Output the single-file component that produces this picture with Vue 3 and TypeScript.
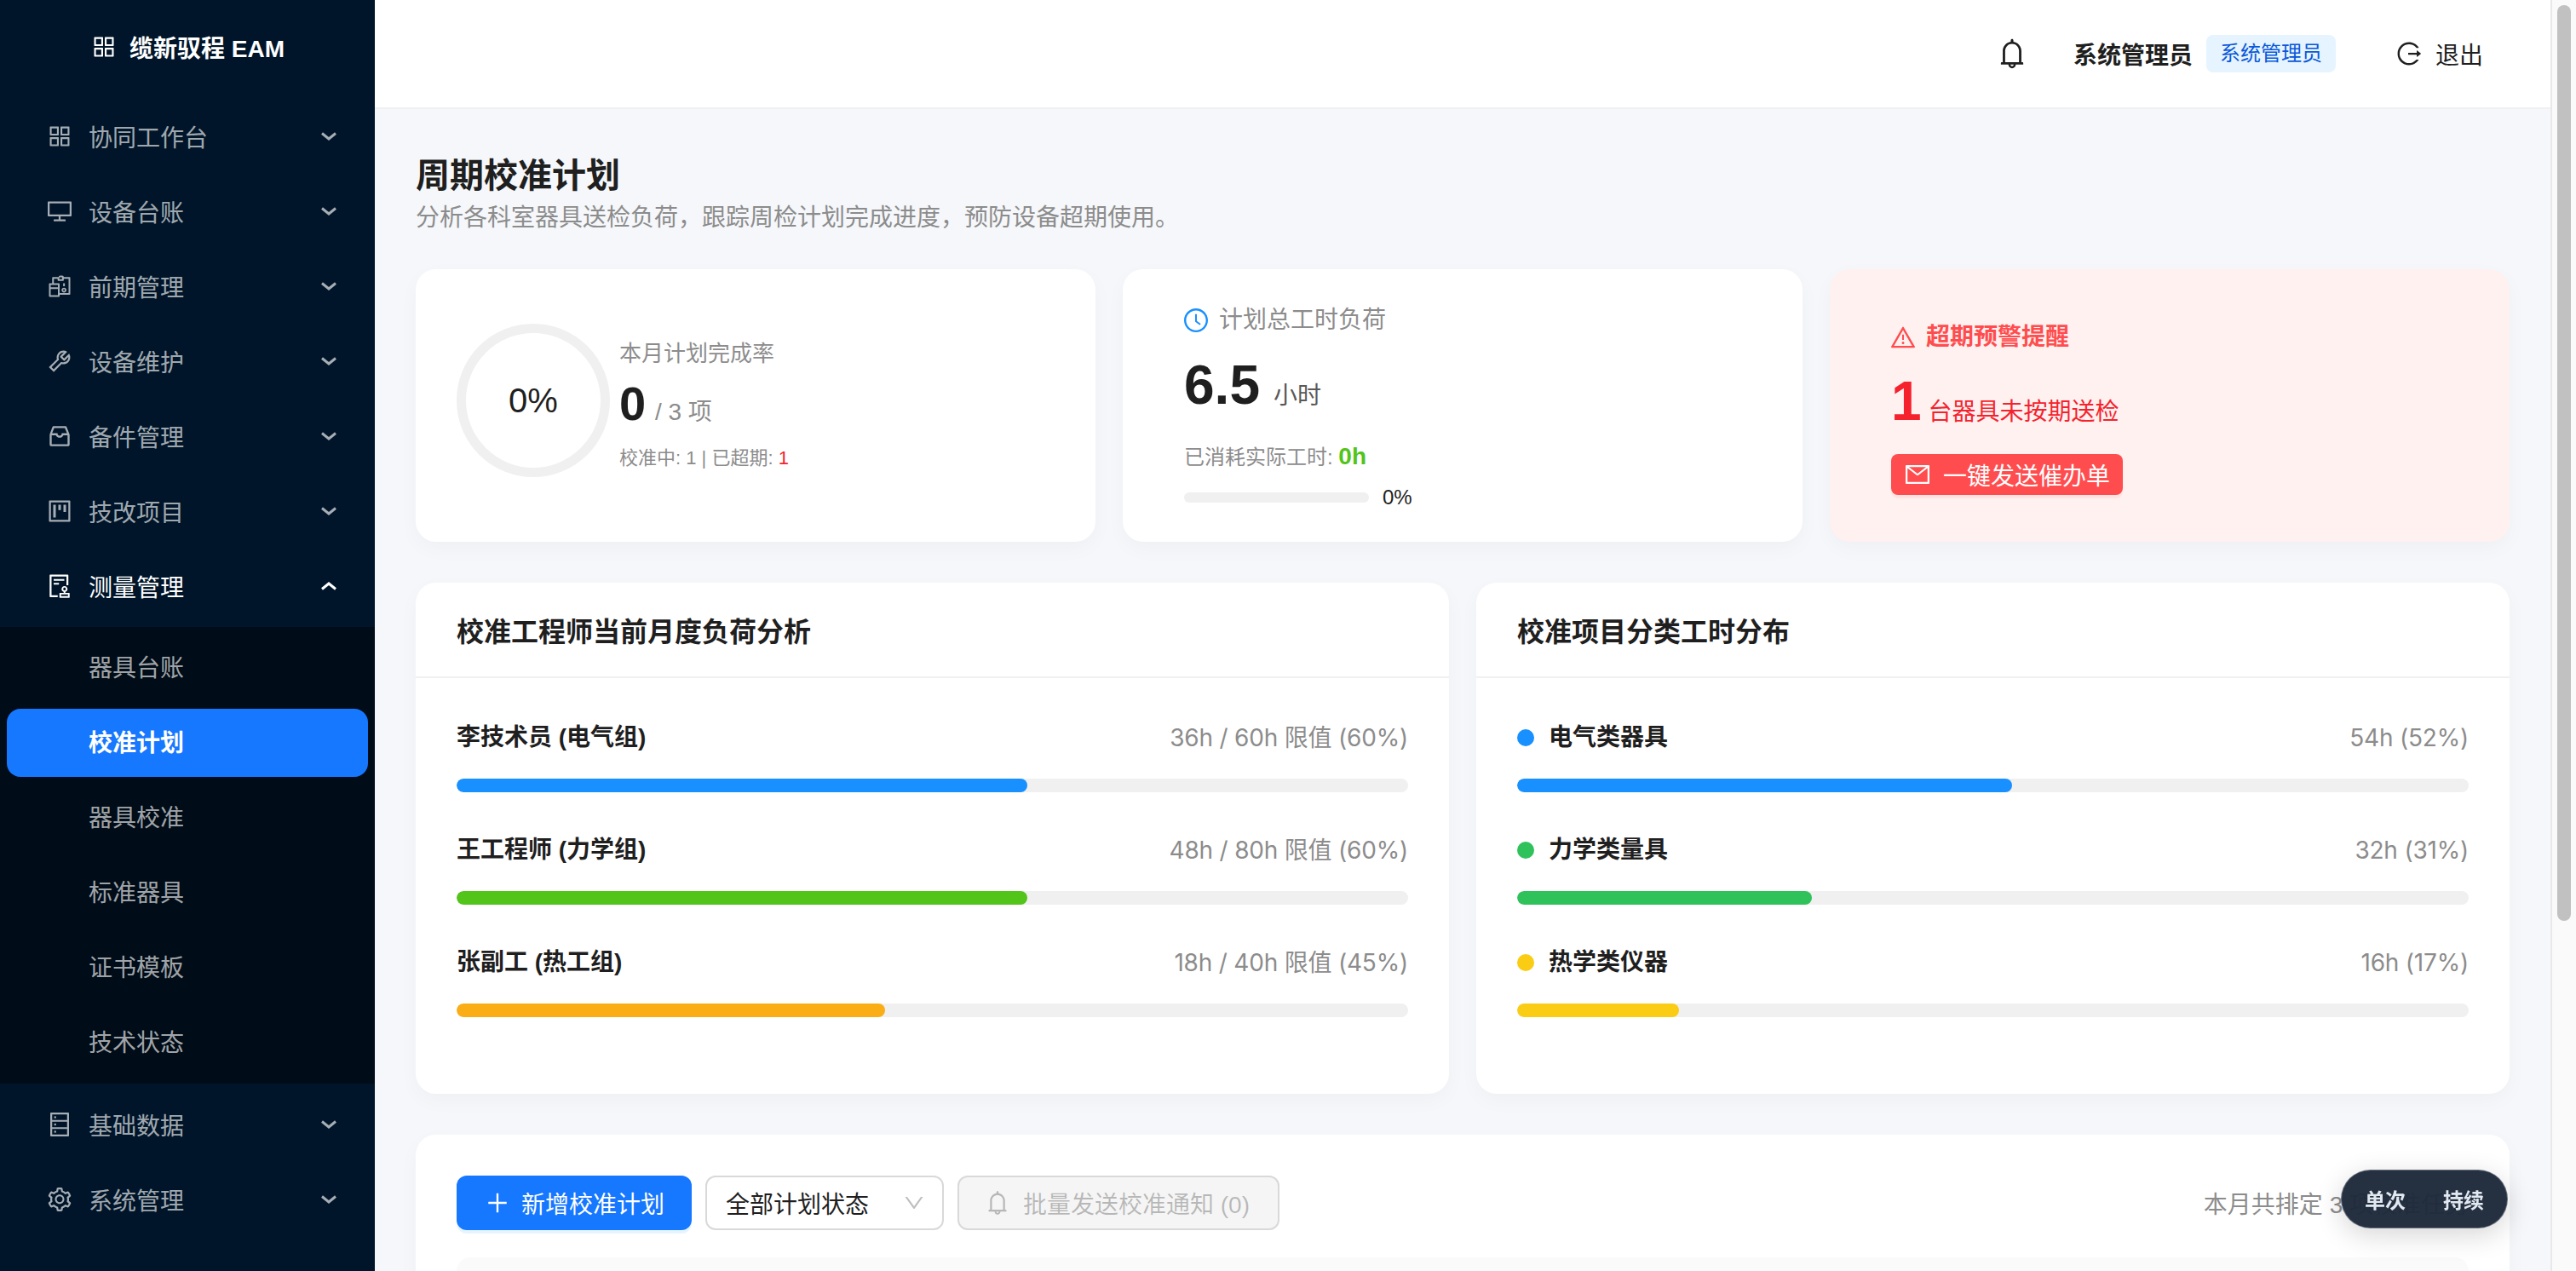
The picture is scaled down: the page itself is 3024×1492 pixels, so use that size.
<script setup lang="ts">
const icons: Record<string, string> = {
  appstore: "M464 144H160c-8.8 0-16 7.2-16 16v304c0 8.8 7.2 16 16 16h304c8.8 0 16-7.2 16-16V160c0-8.8-7.2-16-16-16zm-52 268H212V212h200v200zm452-268H560c-8.8 0-16 7.2-16 16v304c0 8.8 7.2 16 16 16h304c8.8 0 16-7.2 16-16V160c0-8.8-7.2-16-16-16zm-52 268H612V212h200v200zM464 544H160c-8.8 0-16 7.2-16 16v304c0 8.8 7.2 16 16 16h304c8.8 0 16-7.2 16-16V560c0-8.8-7.2-16-16-16zm-52 268H212V612h200v200zm452-268H560c-8.8 0-16 7.2-16 16v304c0 8.8 7.2 16 16 16h304c8.8 0 16-7.2 16-16V560c0-8.8-7.2-16-16-16zm-52 268H612V612h200v200z",
  desktop: "M928 140H96c-17.7 0-32 14.3-32 32v496c0 17.7 14.3 32 32 32h380v112H304c-8.8 0-16 7.2-16 16v48c0 4.4 3.6 8 8 8h432c4.4 0 8-3.6 8-8v-48c0-8.8-7.2-16-16-16H548V700h380c17.7 0 32-14.3 32-32V172c0-17.7-14.3-32-32-32zm-40 488H136V212h752v416z",
  reconcile: "M232 400V200c0-17.7 14.3-32 32-32h212c0-30.9 25.1-56 56-56h80c30.9 0 56 25.1 56 56h212c17.7 0 32 14.3 32 32v600c0 17.7-14.3 32-32 32H512v-64h336V232H668v48c0 17.7-14.3 32-32 32H468c-17.7 0-32-14.3-32-32v-48H296v168h-64zM500 248h104v-56c0-8-6-16-16-16h-72c-10 0-16 8-16 16v56zM144 400h336c17.7 0 32 14.3 32 32v448c0 17.7-14.3 32-32 32H144c-17.7 0-32-14.3-32-32V432c0-17.7 14.3-32 32-32zm32 64v88h272v-88H176zm0 152v232h272V616H176zM652 400h48c4.4 0 8 3.6 8 8v96c0 4.4-3.6 8-8 8h-48c-4.4 0-8-3.6-8-8v-96c0-4.4 3.6-8 8-8zm24 165c50.8 0 92 41.2 92 92s-41.2 92-92 92-92-41.2-92-92 41.2-92 92-92zm0 58c-18.8 0-34 15.2-34 34s15.2 34 34 34 34-15.2 34-34-15.2-34-34-34z",
  tool: "M876.6 239.5c-.5-.9-1.2-1.8-2-2.5-5-5-13.1-5-18.1 0L684.2 409.3l-67.9-67.9L788.7 169c.8-.8 1.4-1.6 2-2.5 3.6-6.1 1.6-13.9-4.5-17.5-98.2-58-226.8-44.7-311.3 39.7-67 67-89.2 162-66.5 247.4l-293 293c-3 3-2.8 7.9.3 11l169.7 169.7c3.1 3.1 8.1 3.3 11 .3l292.9-292.9c85.5 22.8 180.5.7 247.6-66.4 84.4-84.5 97.7-213.1 39.7-311.3zM786 499.8c-58.1 58.1-145.3 69.3-214.6 33.6l-8.8 8.8-.1-.1-274 274.1-79.2-79.2 230.1-230.1s0 .1.1.1l52.8-52.8c-35.7-69.3-24.5-156.5 33.6-214.6a184.2 184.2 0 01144-53.5L537 318.9a32.05 32.05 0 000 45.3l124.5 124.5a32.05 32.05 0 0045.3 0l132.8-132.8c3.7 51.8-14.4 104.8-53.6 143.9z",
  inbox: "M885.2 446.3l-.2-.8-112.2-285.1c-5-16.1-19.9-27.2-36.8-27.2H281.2c-17 0-32.1 11.3-36.9 27.6L139.4 443l-.3.7-.2.8c-1.3 4.9-1.7 9.9-1 14.8-.1 1.6-.2 3.2-.2 4.8V830a60.9 60.9 0 0060.8 60.8h627.2c33.5 0 60.8-27.3 60.9-60.8V464.1c0-1.3 0-2.6-.1-3.7.4-4.9 0-9.6-1.3-14.1zm-295.8-43l-.3 15.7c-.8 44.9-31.8 75.1-77.1 75.1-22.1 0-41.1-7.1-54.8-20.6S436 441.2 435.6 419l-.3-15.7H229.5L309 210h399.2l81.7 193.3H589.4zm-375 76.8h157.3c24.3 57.1 76 90.8 140.4 90.8 33.7 0 65-9.4 90.3-27.2 22.2-15.6 39.5-37.4 50.7-63.6h156.5V814H214.4V480.1z",
  project: "M280 752h80c4.4 0 8-3.6 8-8V280c0-4.4-3.6-8-8-8h-80c-4.4 0-8 3.6-8 8v464c0 4.4 3.6 8 8 8zm192-280h80c4.4 0 8-3.6 8-8V280c0-4.4-3.6-8-8-8h-80c-4.4 0-8 3.6-8 8v184c0 4.4 3.6 8 8 8zm192 72h80c4.4 0 8-3.6 8-8V280c0-4.4-3.6-8-8-8h-80c-4.4 0-8 3.6-8 8v256c0 4.4 3.6 8 8 8zm216-432H144c-17.7 0-32 14.3-32 32v736c0 17.7 14.3 32 32 32h736c17.7 0 32-14.3 32-32V144c0-17.7-14.3-32-32-32zm-40 728H184V184h656v656z",
  audit: "M296 250c-4.4 0-8 3.6-8 8v48c0 4.4 3.6 8 8 8h384c4.4 0 8-3.6 8-8v-48c0-4.4-3.6-8-8-8H296zm184 144H296c-4.4 0-8 3.6-8 8v48c0 4.4 3.6 8 8 8h184c4.4 0 8-3.6 8-8v-48c0-4.4-3.6-8-8-8zm-48 458H208V148h560v320c0 4.4 3.6 8 8 8h56c4.4 0 8-3.6 8-8V108c0-17.7-14.3-32-32-32H168c-17.7 0-32 14.3-32 32v784c0 17.7 14.3 32 32 32h264c4.4 0 8-3.6 8-8v-56c0-4.4-3.6-8-8-8zm440-88H728v-36.6c46.3-13.8 80-56.6 80-107.4 0-61.9-50.1-112-112-112s-112 50.1-112 112c0 50.7 33.7 93.6 80 107.4V764H520c-8.8 0-16 7.2-16 16v152c0 8.8 7.2 16 16 16h352c8.8 0 16-7.2 16-16V780c0-8.8-7.2-16-16-16zM646 620c0-27.6 22.4-50 50-50s50 22.4 50 50-22.4 50-50 50-50-22.4-50-50zm180 266H566v-60h260v60z",
  database: "M832 64H192c-17.7 0-32 14.3-32 32v832c0 17.7 14.3 32 32 32h640c17.7 0 32-14.3 32-32V96c0-17.7-14.3-32-32-32zm-600 72h560v208H232V136zm560 480H232V408h560v208zm0 272H232V680h560v208zM304 240a40 40 0 1080 0 40 40 0 10-80 0zm0 272a40 40 0 1080 0 40 40 0 10-80 0zm0 272a40 40 0 1080 0 40 40 0 10-80 0z",
  setting: "M924.8 625.7l-65.5-56c3.1-19 4.7-38.4 4.7-57.8s-1.6-38.8-4.7-57.8l65.5-56a32.03 32.03 0 009.3-35.2l-.9-2.6a443.74 443.74 0 00-79.7-137.9l-1.8-2.1a32.12 32.12 0 00-35.1-9.5l-81.3 28.9c-30-24.6-63.5-44-99.7-57.6l-15.7-85a32.05 32.05 0 00-25.8-25.7l-2.7-.5c-52.1-9.4-106.9-9.4-159 0l-2.7.5a32.05 32.05 0 00-25.8 25.7l-15.8 85.4a351.86 351.86 0 00-99 57.4l-81.9-29.1a32 32 0 00-35.1 9.5l-1.8 2.1a446.02 446.02 0 00-79.7 137.9l-.9 2.6c-4.5 12.5-.8 26.5 9.3 35.2l66.3 56.6c-3.1 18.8-4.6 38-4.6 57.1 0 19.2 1.5 38.4 4.6 57.1L99 625.5a32.03 32.03 0 00-9.3 35.2l.9 2.6c18.1 50.4 44.9 96.9 79.7 137.9l1.8 2.1a32.12 32.12 0 0035.1 9.5l81.9-29.1c29.8 24.5 63.1 43.9 99 57.4l15.8 85.4a32.05 32.05 0 0025.8 25.7l2.7.5a449.4 449.4 0 00159 0l2.7-.5a32.05 32.05 0 0025.8-25.7l15.7-85a350 350 0 0099.7-57.6l81.3 28.9a32 32 0 0035.1-9.5l1.8-2.1c34.8-41.1 61.6-87.5 79.7-137.9l.9-2.6c4.5-12.3.8-26.3-9.3-35zM788.3 465.9c2.5 15.1 3.8 30.6 3.8 46.1s-1.3 31-3.8 46.1l-6.6 40.1 74.7 63.9a370.03 370.03 0 01-42.6 73.6L721 702.8l-31.4 25.8c-23.9 19.6-50.5 35-79.3 45.8l-38.1 14.3-17.9 97a377.5 377.5 0 01-85 0l-17.9-97.2-37.8-14.5c-28.5-10.8-55-26.2-78.7-45.7l-31.4-25.9-93.4 33.2c-17-22.9-31.2-47.6-42.6-73.6l75.5-64.5-6.5-40c-2.4-14.9-3.7-30.3-3.7-45.5 0-15.3 1.2-30.6 3.7-45.5l6.5-40-75.5-64.5c11.3-26.1 25.6-50.7 42.6-73.6l93.4 33.2 31.4-25.9c23.7-19.5 50.2-34.9 78.7-45.7l37.9-14.3 17.9-97.2c28.1-3.2 56.8-3.2 85 0l17.9 97 38.1 14.3c28.7 10.8 55.4 26.2 79.3 45.8l31.4 25.8 92.8-32.9c17 22.9 31.2 47.6 42.6 73.6L781.8 426l6.5 39.9zM512 326c-97.2 0-176 78.8-176 176s78.8 176 176 176 176-78.8 176-176-78.8-176-176-176zm79.2 255.2A111.6 111.6 0 01512 614c-29.9 0-58-11.7-79.2-32.8A111.6 111.6 0 01400 502c0-29.9 11.7-58 32.8-79.2C454 401.6 482.1 390 512 390c29.9 0 58 11.6 79.2 32.8A111.6 111.6 0 01624 502c0 29.9-11.7 58-32.8 79.2z",
  bell: "M816 768h-24V428c0-141.1-104.3-257.7-240-277.1V112c0-22.1-17.9-40-40-40s-40 17.9-40 40v38.9c-135.7 19.4-240 136-240 277.1v340h-24c-17.7 0-32 14.3-32 32v32c0 4.4 3.6 8 8 8h216c0 61.8 50.2 112 112 112s112-50.2 112-112h216c4.4 0 8-3.6 8-8v-32c0-17.7-14.3-32-32-32zM512 888c-26.5 0-48-21.5-48-48h96c0 26.5-21.5 48-48 48zM304 768V428c0-55.6 21.6-107.8 60.9-147.1S456.4 220 512 220c55.6 0 107.8 21.6 147.1 60.9S720 372.4 720 428v340H304z",
  logout: "M868 732h-70.3c-4.8 0-9.3 2.1-12.3 5.8-7 8.5-14.5 16.7-22.4 24.5a353.84 353.84 0 01-112.7 75.9A352.8 352.8 0 01512.4 866c-47.9 0-94.3-9.4-137.9-27.8a353.84 353.84 0 01-112.7-75.9 353.28 353.28 0 01-76-112.5C167.3 606.2 158 559.9 158 512s9.4-94.2 27.8-137.8c17.8-42.1 43.4-80 76-112.5s70.5-58.1 112.7-75.9c43.6-18.4 90-27.8 137.9-27.8 47.9 0 94.3 9.3 137.9 27.8 42.2 17.8 80.1 43.4 112.7 75.9 7.9 7.9 15.3 16.1 22.4 24.5 3 3.7 7.6 5.8 12.3 5.8H868c6.3 0 10.2-7 6.7-12.3C798 160.5 663.8 81.6 511.3 82 271.7 82.6 79.6 277.1 82 516.4 84.4 751.9 276.2 942 512.4 942c152.1 0 285.7-78.8 362.3-197.7 3.4-5.3-.4-12.3-6.7-12.3zm88.9-226.3L815 393.7c-5.3-4.2-13-.4-13 6.3v76H488c-4.4 0-8 3.6-8 8v56c0 4.4 3.6 8 8 8h314v76c0 6.7 7.8 10.5 13 6.3l141.9-112a8 8 0 000-12.6z",
  clock: "M512 64C264.6 64 64 264.6 64 512s200.6 448 448 448 448-200.6 448-448S759.4 64 512 64zm0 820c-205.4 0-372-166.6-372-372s166.6-372 372-372 372 166.6 372 372-166.6 372-372 372zM686.7 638.6L544.1 535.5V288c0-4.4-3.6-8-8-8H488c-4.4 0-8 3.6-8 8v275.4c0 2.6 1.2 5 3.3 6.5l165.4 120.6c3.6 2.6 8.6 1.8 11.2-1.7l28.6-39c2.6-3.7 1.8-8.7-1.8-11.2z",
  warning: "M464 720a48 48 0 1096 0 48 48 0 10-96 0zm16-304v184c0 4.4 3.6 8 8 8h48c4.4 0 8-3.6 8-8V416c0-4.4-3.6-8-8-8h-48c-4.4 0-8 3.6-8 8zm475.7 440l-416-720c-6.2-10.7-16.9-16-27.7-16s-21.6 5.3-27.7 16l-416 720C56 877.4 71.4 904 96 904h832c24.6 0 40-26.6 27.7-48zm-783.5-27.9L512 239.9l339.8 588.2H172.2z",
  mail: "M928 160H96c-17.7 0-32 14.3-32 32v640c0 17.7 14.3 32 32 32h832c17.7 0 32-14.3 32-32V192c0-17.7-14.3-32-32-32zm-40 110.8V792H136V270.8l-27.6-21.5 39.3-50.5 42.8 33.3h643.1l42.8-33.3 39.3 50.5-27.7 21.5zM833.6 232L512 482 190.4 232l-42.8-33.3-39.3 50.5 27.6 21.5 341.6 265.6a55.99 55.99 0 0068.7 0L888 270.8l27.6-21.5-39.3-50.5-42.7 33.2z",
  plus: "M482 152h60q8 0 8 8v704q0 8-8 8h-60q-8 0-8-8V160q0-8 8-8zM176 474h672q8 0 8 8v60q0 8-8 8H176q-8 0-8-8v-60q0-8 8-8z",
  down: "M884 256h-75c-5.1 0-9.9 2.5-12.9 6.6L512 654.2 227.9 262.6c-3-4.1-7.8-6.6-12.9-6.6h-75c-6.5 0-10.3 7.4-6.5 12.7l352.6 486.1c12.8 17.6 39 17.6 51.7 0l352.6-486.1c3.9-5.3.1-12.7-6.4-12.7z",
}

const topMenu = [
  { name: "协同工作台", icon: "appstore" },
  { name: "设备台账", icon: "desktop" },
  { name: "前期管理", icon: "reconcile" },
  { name: "设备维护", icon: "tool" },
  { name: "备件管理", icon: "inbox" },
  { name: "技改项目", icon: "project" },
]
const subMenu = ["器具台账", "校准计划", "器具校准", "标准器具", "证书模板", "技术状态"]
const bottomMenu = [
  { name: "基础数据", icon: "database" },
  { name: "系统管理", icon: "setting" },
]

const engineers = [
  { name: "李技术员 (电气组)", info: "36h / 60h 限值 (60%)", pct: 60, color: "#1890ff" },
  { name: "王工程师 (力学组)", info: "48h / 80h 限值 (60%)", pct: 60, color: "#52c41a" },
  { name: "张副工 (热工组)", info: "18h / 40h 限值 (45%)", pct: 45, color: "#faad14" },
]
const categories = [
  { name: "电气类器具", info: "54h (52%)", pct: 52, color: "#1890ff" },
  { name: "力学类量具", info: "32h (31%)", pct: 31, color: "#2fc25b" },
  { name: "热学类仪器", info: "16h (17%)", pct: 17, color: "#facc14" },
]
</script>

<template>
  <div class="app">
    <aside class="sider">
      <div class="logo">
        <svg class="logo-icon" viewBox="0 0 1024 1024"><path :d="icons.appstore" /></svg>
        <span>缆新驭程 EAM</span>
      </div>
      <div class="menu">
        <div v-for="m in topMenu" :key="m.name" class="item">
          <svg class="icon" viewBox="0 0 1024 1024"><path :d="icons[m.icon]" /></svg>
          <span class="label">{{ m.name }}</span>
          <svg class="arrow" viewBox="0 0 20 12"><path d="M2 2.5 10 9l8-6.5" /></svg>
        </div>
        <div class="item open">
          <svg class="icon" viewBox="0 0 1024 1024"><path :d="icons.audit" /></svg>
          <span class="label">测量管理</span>
          <svg class="arrow" viewBox="0 0 20 12"><path d="M2 9.5 10 3l8 6.5" /></svg>
        </div>
        <div class="sub">
          <div v-for="s in subMenu" :key="s" class="sub-item" :class="{ active: s === '校准计划' }">{{ s }}</div>
        </div>
        <div v-for="m in bottomMenu" :key="m.name" class="item">
          <svg class="icon" viewBox="0 0 1024 1024"><path :d="icons[m.icon]" /></svg>
          <span class="label">{{ m.name }}</span>
          <svg class="arrow" viewBox="0 0 20 12"><path d="M2 2.5 10 9l8-6.5" /></svg>
        </div>
      </div>
    </aside>

    <div class="right">
      <header class="topbar">
        <svg class="bell" viewBox="0 0 1024 1024"><path :d="icons.bell" /></svg>
        <span class="user">系统管理员</span>
        <span class="tag">系统管理员</span>
        <span class="logout">
          <svg class="logout-icon" viewBox="0 0 1024 1024"><path :d="icons.logout" /></svg>
          退出
        </span>
      </header>

      <main class="content">
        <h1 class="title">周期校准计划</h1>
        <p class="subtitle">分析各科室器具送检负荷，跟踪周检计划完成进度，预防设备超期使用。</p>

        <section class="stats">
          <div class="stat stat-rate">
            <div class="ring">0%</div>
            <div class="rate-text">
              <div class="rate-label">本月计划完成率</div>
              <div class="rate-value"><b>0</b><span> / 3 项</span></div>
              <div class="rate-foot">校准中: 1 | 已超期: <em>1</em></div>
            </div>
          </div>

          <div class="stat stat-hours">
            <div class="hours-title">
              <svg class="clock" viewBox="0 0 1024 1024"><path :d="icons.clock" /></svg>
              计划总工时负荷
            </div>
            <div class="hours-value"><b>6.5</b><span>小时</span></div>
            <div class="hours-used">已消耗实际工时: <b>0h</b></div>
            <div class="hours-progress">
              <div class="mini-track"></div>
              <span>0%</span>
            </div>
          </div>

          <div class="stat stat-alert">
            <div class="alert-title">
              <svg class="warn" viewBox="0 0 1024 1024"><path :d="icons.warning" /></svg>
              超期预警提醒
            </div>
            <div class="alert-value"><b>1</b><span>台器具未按期送检</span></div>
            <button type="button" class="alert-btn">
              <svg class="btn-icon" viewBox="0 0 1024 1024"><path :d="icons.mail" /></svg>
              一键发送催办单
            </button>
          </div>
        </section>

        <section class="charts">
          <div class="chart">
            <div class="chart-head">校准工程师当前月度负荷分析</div>
            <div class="chart-body">
              <div v-for="r in engineers" :key="r.name" class="row">
                <div class="row-head">
                  <span class="row-name">{{ r.name }}</span>
                  <span class="row-info">{{ r.info }}</span>
                </div>
                <div class="track">
                  <div class="fill" :style="{ width: r.pct + '%', background: r.color }"></div>
                </div>
              </div>
            </div>
          </div>
          <div class="chart">
            <div class="chart-head">校准项目分类工时分布</div>
            <div class="chart-body">
              <div v-for="r in categories" :key="r.name" class="row">
                <div class="row-head">
                  <span class="row-name">
                    <i class="dot" :style="{ background: r.color }"></i>{{ r.name }}
                  </span>
                  <span class="row-info">{{ r.info }}</span>
                </div>
                <div class="track">
                  <div class="fill" :style="{ width: r.pct + '%', background: r.color }"></div>
                </div>
              </div>
            </div>
          </div>
        </section>

        <section class="plans">
          <div class="toolbar">
            <button type="button" class="btn-primary">
              <svg class="btn-icon" viewBox="0 0 1024 1024"><path :d="icons.plus" /></svg>
              新增校准计划
            </button>
            <div class="select">
              <span>全部计划状态</span>
              <svg class="select-arrow" viewBox="0 0 1024 1024"><path :d="icons.down" /></svg>
            </div>
            <button type="button" class="btn-disabled" disabled>
              <svg class="btn-icon" viewBox="0 0 1024 1024"><path :d="icons.bell" /></svg>
              批量发送校准通知 (0)
            </button>
            <span class="total">本月共排定 3 项校准任务</span>
          </div>
          <div class="table-head"></div>
        </section>
      </main>
    </div>

    <div class="scrollbar">
      <div class="thumb"></div>
    </div>

    <div class="pill">
      <span>单次</span>
      <span>持续</span>
    </div>
  </div>
</template>

<style>
html, body {
  overflow: hidden;
}
</style>

<style scoped>
.app {
  display: flex;
  height: 100vh;
  font-family: "Liberation Sans", "Noto Sans CJK SC", sans-serif;
  font-size: 28px;
  color: #1f1f1f;
}
svg {
  fill: currentColor;
  flex: none;
}

/* sidebar */
.sider {
  width: 440px;
  flex: none;
  background: #001529;
}
.logo {
  height: 110px;
  display: flex;
  align-items: center;
  justify-content: center;
  gap: 14px;
  color: #fff;
  font-weight: 700;
}
.logo-icon {
  width: 32px;
  height: 32px;
}
.menu {
  padding-top: 10px;
}
.item {
  height: 80px;
  margin-bottom: 8px;
  padding: 0 44px 0 54px;
  display: flex;
  align-items: center;
  color: rgba(255, 255, 255, 0.65);
}
.item .icon {
  width: 32px;
  height: 32px;
  margin-right: 18px;
}
.item .label {
  flex: 1;
}
.arrow {
  width: 20px;
  height: 12px;
  fill: none;
  stroke: currentColor;
  stroke-width: 3;
}
.item.open {
  color: #fff;
}
.sub {
  background: #000c17;
  padding: 8px 0;
  margin-bottom: 8px;
}
.sub-item {
  height: 80px;
  line-height: 82px;
  margin: 0 8px 8px;
  padding-left: 96px;
  border-radius: 16px;
  color: rgba(255, 255, 255, 0.65);
}
.sub-item:last-child {
  margin-bottom: 0;
}
.sub-item.active {
  background: #1677ff;
  color: #fff;
  font-weight: 600;
}

/* right pane */
.right {
  flex: 1;
  min-width: 0;
  overflow: hidden;
  background: #f5f7fa;
}
.scrollbar {
  width: 30px;
  flex: none;
  box-sizing: border-box;
  padding: 6px 6px 0;
  background: #fafafa;
  border-left: 2px solid #e8e8e8;
}
.thumb {
  height: 1075px;
  background: #c1c1c1;
  border-radius: 8px;
}
.topbar {
  height: 128px;
  box-sizing: border-box;
  background: #fff;
  border-bottom: 2px solid #f0f0f0;
  display: flex;
  align-items: center;
  justify-content: flex-end;
  padding-right: 79px;
}
.bell {
  width: 40px;
  height: 40px;
  margin-right: 52px;
}
.user {
  font-weight: 600;
  margin-right: 16px;
}
.tag {
  height: 44px;
  line-height: 44px;
  padding: 0 16px;
  background: #e6f4ff;
  color: #0958d9;
  border-radius: 8px;
  font-size: 24px;
  margin-right: 70px;
}
.logout {
  display: flex;
  align-items: center;
  gap: 15px;
}
.logout-icon {
  width: 32px;
  height: 32px;
}

.content {
  padding: 48px;
}
.title {
  margin: 2px 0 0;
  font-size: 40px;
  line-height: 56px;
  font-weight: 700;
}
.subtitle {
  margin: 0 0 38px;
  line-height: 44px;
  color: #8c8c8c;
}

.stats {
  display: grid;
  grid-template-columns: repeat(3, 1fr);
  gap: 32px;
  margin-bottom: 48px;
}
.stat {
  height: 320px;
  box-sizing: border-box;
  background: #fff;
  border-radius: 24px;
  box-shadow: 0 8px 24px rgba(0, 0, 0, 0.03);
}
.stat-rate {
  display: flex;
  align-items: center;
  padding: 0 48px;
}
.ring {
  width: 180px;
  height: 180px;
  flex: none;
  box-sizing: border-box;
  margin-bottom: 12px;
  border: 11px solid #f0f0f0;
  border-radius: 50%;
  display: flex;
  align-items: center;
  justify-content: center;
  font-size: 40px;
}
.rate-text {
  margin-left: 11px;
}
.rate-label {
  font-size: 26px;
  line-height: 36px;
  color: #8c8c8c;
}
.rate-value {
  line-height: 82px;
  color: #8c8c8c;
}
.rate-value b {
  font-size: 56px;
  color: #1f1f1f;
}
.rate-value span {
  margin-left: 3px;
}
.rate-foot {
  margin-top: -5px;
  font-size: 22px;
  line-height: 36px;
  color: #8c8c8c;
}
.rate-foot em {
  font-style: normal;
  color: #f5222d;
}

.stat-hours {
  padding: 42px 72px 0;
}
.hours-title {
  display: flex;
  align-items: center;
  gap: 11px;
  line-height: 36px;
  color: #8c8c8c;
}
.clock {
  width: 32px;
  height: 32px;
  margin-left: -2px;
  color: #1890ff;
}
.hours-value {
  margin-top: 18px;
  line-height: 80px;
}
.hours-value b {
  font-size: 64px;
}
.hours-value span {
  margin-left: 16px;
  color: #595959;
}
.hours-used {
  margin-top: 11px;
  line-height: 40px;
  font-size: 24px;
  color: #8c8c8c;
}
.hours-used b {
  font-size: 28px;
  color: #52c41a;
}
.hours-progress {
  margin-top: 9px;
  height: 36px;
  display: flex;
  align-items: center;
  gap: 16px;
  font-size: 24px;
}
.mini-track {
  width: 217px;
  height: 12px;
  background: #f0f0f0;
  border-radius: 6px;
}

.stat-alert {
  padding: 62px 72px 0;
  background: #fff1f0;
}
.alert-title {
  display: flex;
  align-items: center;
  gap: 11px;
  line-height: 36px;
  color: #ff4d4f;
  font-weight: 700;
}
.warn {
  width: 32px;
  height: 32px;
  margin-left: -2px;
}
.alert-value {
  margin-top: 17px;
  line-height: 80px;
  color: #f5222d;
}
.alert-value b {
  font-size: 64px;
}
.alert-value span {
  margin-left: 8px;
}
.alert-btn {
  margin-top: 9px;
  height: 48px;
  width: 272px;
  padding: 0;
  display: flex;
  align-items: center;
  justify-content: center;
  gap: 14px;
  border: none;
  border-radius: 8px;
  background: #ff4d4f;
  color: #fff;
  font: inherit;
  box-shadow: 0 4px 0 rgba(255, 38, 5, 0.06);
}
.btn-icon {
  width: 32px;
  height: 32px;
}

.charts {
  display: grid;
  grid-template-columns: repeat(2, 1fr);
  gap: 32px;
  margin-bottom: 48px;
}
.chart {
  height: 600px;
  background: #fff;
  border-radius: 24px;
  box-shadow: 0 8px 24px rgba(0, 0, 0, 0.03);
}
.chart-head {
  height: 112px;
  box-sizing: border-box;
  padding-left: 48px;
  border-bottom: 2px solid #f0f0f0;
  display: flex;
  align-items: center;
  font-size: 32px;
  font-weight: 600;
}
.chart-body {
  padding: 48px 48px 0;
}
.row {
  margin-bottom: 46px;
}
.row-head {
  display: flex;
  justify-content: space-between;
  line-height: 44px;
  margin-bottom: 26px;
}
.row-name {
  display: flex;
  align-items: center;
  font-weight: 600;
}
.row-info {
  font-family: "Inter", "Noto Sans CJK SC", sans-serif;
  letter-spacing: -0.2px;
  color: #8c8c8c;
}
.dot {
  width: 20px;
  height: 20px;
  border-radius: 50%;
  margin-right: 17px;
}
.track {
  height: 16px;
  background: #f0f0f0;
  border-radius: 8px;
  overflow: hidden;
}
.fill {
  height: 100%;
  border-radius: 8px;
}

.plans {
  height: 670px;
  box-sizing: border-box;
  padding: 48px;
  background: #fff;
  border-radius: 24px;
  box-shadow: 0 8px 24px rgba(0, 0, 0, 0.03);
}
.toolbar {
  display: flex;
  align-items: center;
  gap: 16px;
  margin-bottom: 32px;
}
.btn-primary,
.btn-disabled {
  height: 64px;
  display: flex;
  align-items: center;
  justify-content: center;
  gap: 14px;
  padding: 0;
  border-radius: 12px;
  font: inherit;
}
.btn-primary {
  width: 276px;
  gap: 12px;
  border: none;
  background: #1677ff;
  color: #fff;
  box-shadow: 0 4px 0 rgba(5, 145, 255, 0.1);
}
.btn-disabled {
  width: 378px;
  box-sizing: border-box;
  padding-right: 4px;
  border: 2px solid #d9d9d9;
  background: #f5f5f5;
  color: rgba(0, 0, 0, 0.25);
}
.select {
  width: 280px;
  height: 64px;
  box-sizing: border-box;
  border: 2px solid #d9d9d9;
  border-radius: 12px;
  background: #fff;
  padding: 0 19px 0 22px;
  display: flex;
  align-items: center;
  justify-content: space-between;
}
.select-arrow {
  width: 28px;
  height: 28px;
  color: #bfbfbf;
}
.total {
  margin-left: auto;
  color: #8c8c8c;
}
.table-head {
  height: 88px;
  background: #fafafa;
  border-radius: 16px 16px 0 0;
}

.pill {
  position: fixed;
  right: 80px;
  bottom: 50px;
  height: 69px;
  box-sizing: border-box;
  padding: 0 27px;
  display: flex;
  align-items: center;
  gap: 44px;
  background: rgba(30, 41, 59, 0.97);
  border: 1px solid rgba(255, 255, 255, 0.3);
  border-radius: 35px;
  box-shadow: 0 8px 32px rgba(0, 0, 0, 0.16);
  color: #e2e8f0;
  font-size: 24px;
  font-weight: 600;
}
</style>
